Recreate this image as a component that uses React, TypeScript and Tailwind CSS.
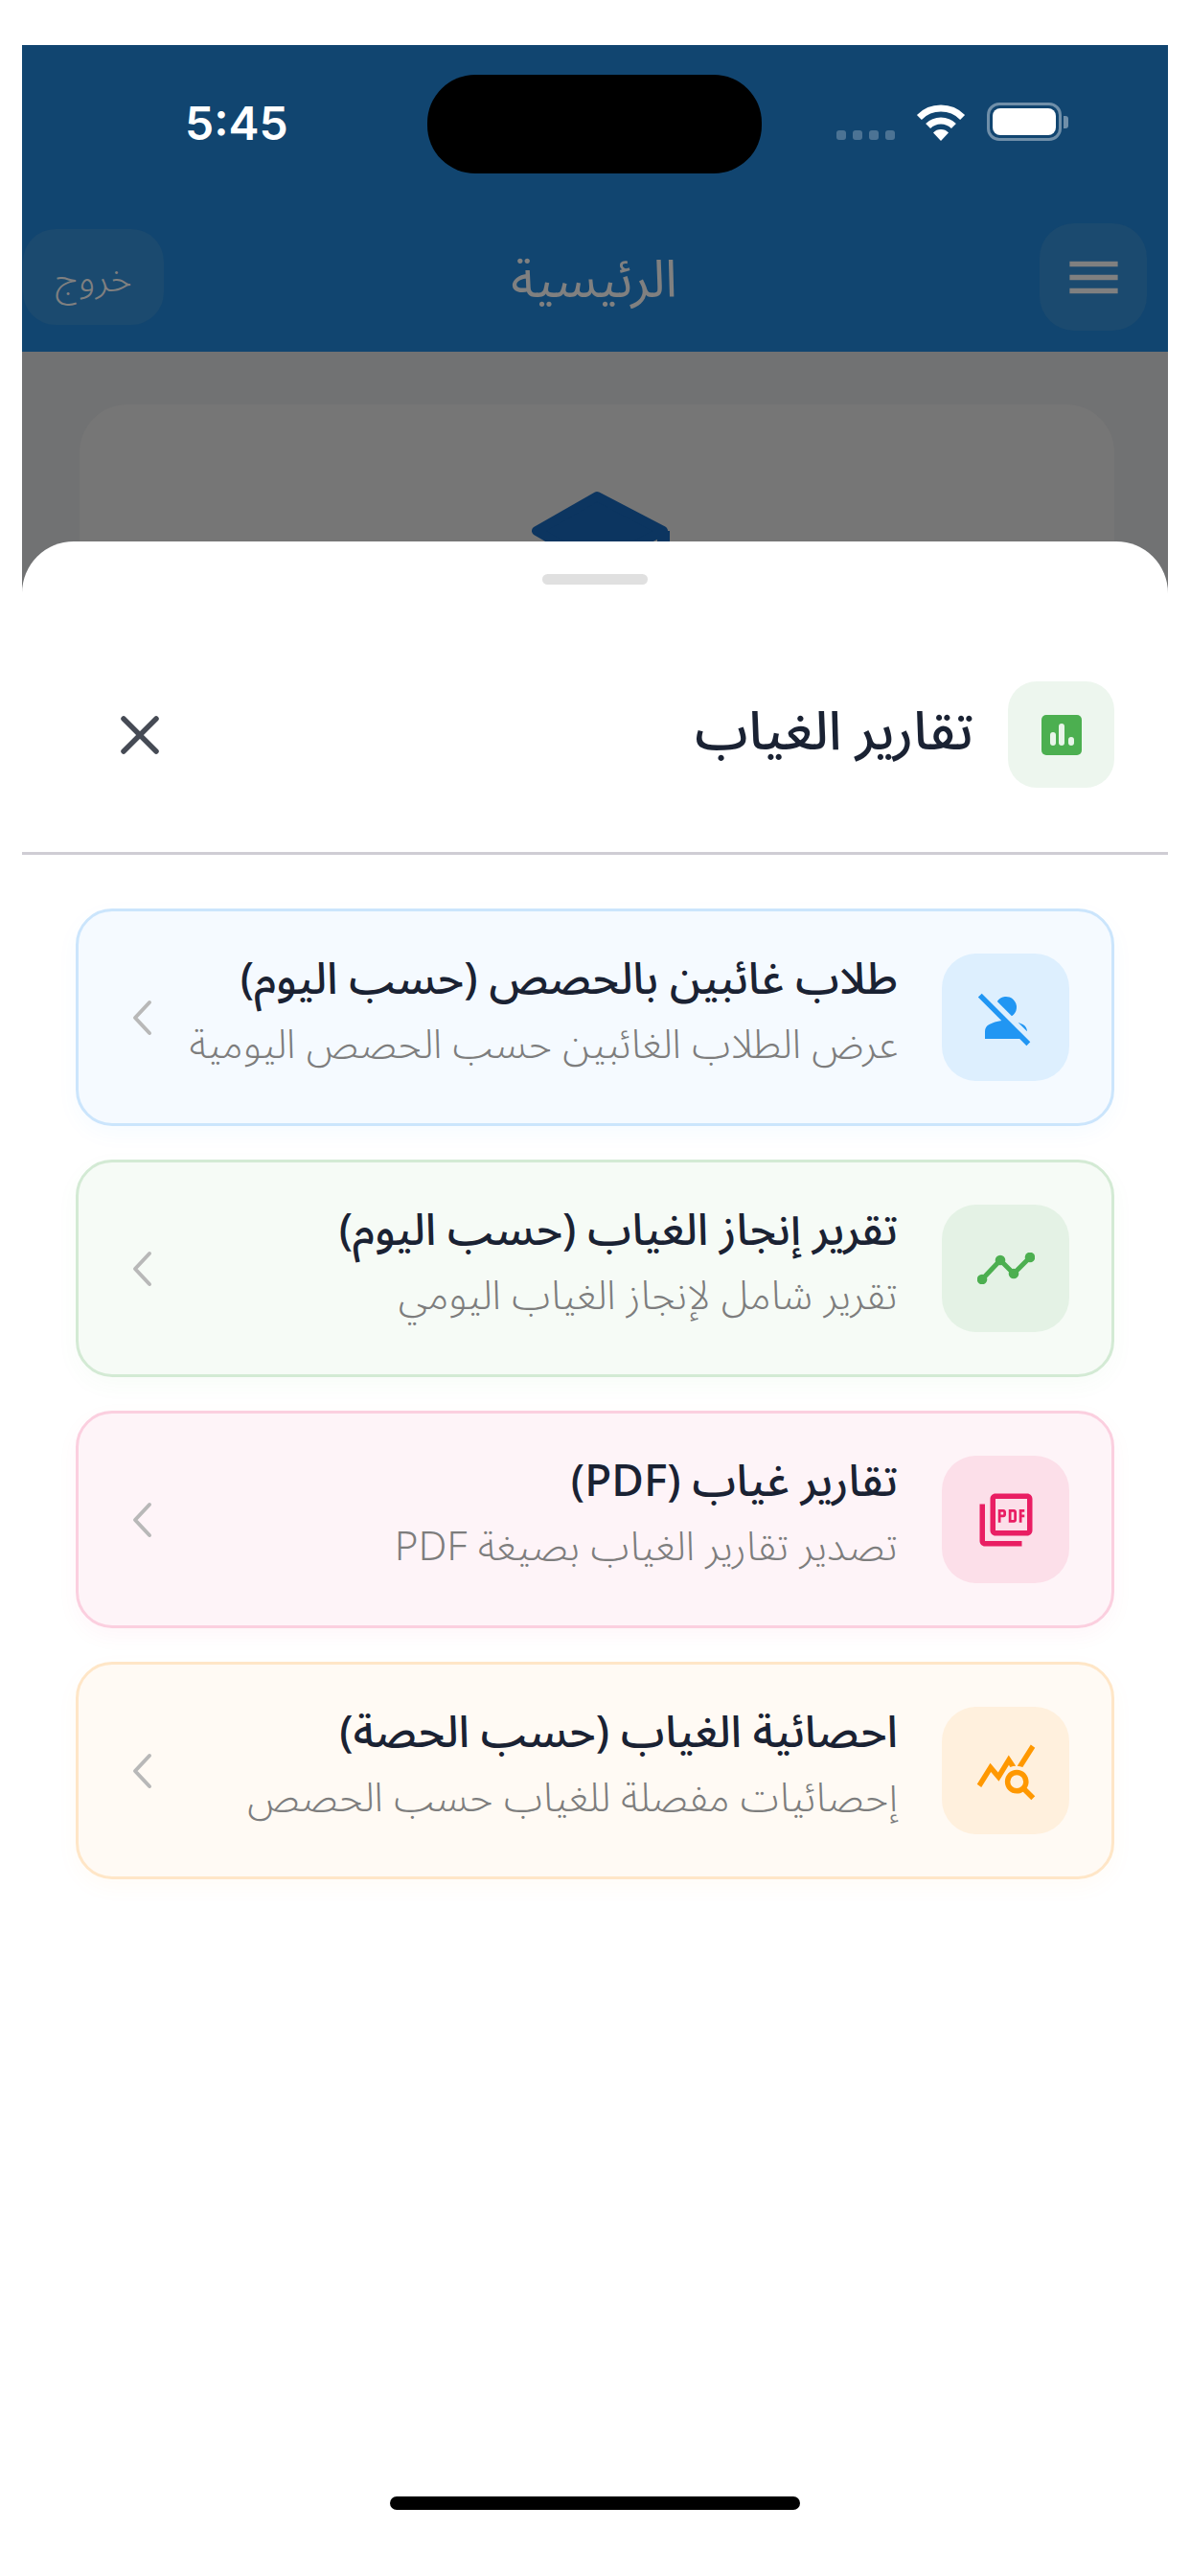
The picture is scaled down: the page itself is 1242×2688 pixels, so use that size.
import { MdMenu, MdOutlinePictureAsPdf, MdPersonOff, MdQueryStats } from 'react-icons/md';
import type { ReactNode } from 'react';

const ARABIC = 'font-["Noto_Sans","Noto_Sans_Arabic","DejaVu_Sans",sans-serif]';

interface Report {
  title: string;
  subtitle: string;
  icon: ReactNode;
  card: string;
  tile: string;
}

// Line with a dot on every corner, wider and taller than the stock timeline icon.
function TrendIcon() {
  return (
    <svg width="60" height="33" viewBox="0 0 60 33" fill="none">
      <path d="M5 28L24 8L38 22L55 5" stroke="#4caf50" strokeWidth="5" strokeLinejoin="round" />
      <circle cx="5" cy="28" r="5.3" fill="#4caf50" />
      <circle cx="24" cy="8" r="5.3" fill="#4caf50" />
      <circle cx="38" cy="22" r="5.3" fill="#4caf50" />
      <circle cx="55" cy="5" r="5.3" fill="#4caf50" />
    </svg>
  );
}

const reports: Report[] = [
  {
    title: 'طلاب غائبين بالحصص (حسب اليوم)',
    subtitle: 'عرض الطلاب الغائبين حسب الحصص اليومية',
    icon: <MdPersonOff size={66} className="text-[#2196f3]" />,
    card: 'bg-[#f5faff] border-[#cbe5fc] shadow-[0_8px_24px_rgba(33,150,243,0.04)]',
    tile: 'bg-[#ddeffe]',
  },
  {
    title: 'تقرير إنجاز الغياب (حسب اليوم)',
    subtitle: 'تقرير شامل لإنجاز الغياب اليومي',
    icon: <TrendIcon />,
    card: 'bg-[#f6fbf6] border-[#d3ead4] shadow-[0_8px_24px_rgba(76,175,80,0.04)]',
    tile: 'bg-[#e4f2e5]',
  },
  {
    title: 'تقارير غياب (PDF)',
    subtitle: 'تصدير تقارير الغياب بصيغة PDF',
    icon: <MdOutlinePictureAsPdf size={66} className="text-[#e91e63]" />,
    card: 'bg-[#fef4f8] border-[#fbcfdf] shadow-[0_8px_24px_rgba(233,30,99,0.04)]',
    tile: 'bg-[#fcdfe9]',
  },
  {
    title: 'احصائية الغياب (حسب الحصة)',
    subtitle: 'إحصائيات مفصلة للغياب حسب الحصص',
    icon: <MdQueryStats size={66} className="text-[#ff9800]" />,
    card: 'bg-[#fffaf4] border-[#ffe6c7] shadow-[0_8px_24px_rgba(255,152,0,0.04)]',
    tile: 'bg-[#fff0dd]',
  },
];

function WifiIcon() {
  return (
    <svg width="54" height="40" viewBox="0 0 54 40" className="text-white">
      <path d="M4.4 15.4A32 32 0 0 1 49.6 15.4" fill="none" stroke="currentColor" strokeWidth="7" />
      <path d="M13.6 24.6A19 19 0 0 1 40.4 24.6" fill="none" stroke="currentColor" strokeWidth="7" />
      <path d="M27 40L19 31.5A11 11 0 0 1 35 31.5Z" fill="currentColor" />
    </svg>
  );
}

function StatusIcons() {
  return (
    <div className="flex items-start w-[242px]">
      <div className="flex gap-[7px] mt-[29px]">
        <span className="w-[10px] h-[10px] rounded-[3px] bg-white/25" />
        <span className="w-[10px] h-[10px] rounded-[3px] bg-white/25" />
        <span className="w-[10px] h-[10px] rounded-[3px] bg-white/25" />
        <span className="w-[10px] h-[10px] rounded-[3px] bg-white/25" />
      </div>
      <div className="ml-[21px]">
        <WifiIcon />
      </div>
      <div className="ml-[21px] w-[79px] h-[40px] rounded-[13px] border-[3px] border-white/40 p-[3px]">
        <div className="w-full h-full rounded-[8px] bg-white" />
      </div>
      <span className="ml-[2px] mt-[14px] w-[5px] h-[13px] rounded-r-[3px] bg-white/40" />
    </div>
  );
}

function ReportCard({ report }: { report: Report }) {
  return (
    <div className={`flex items-center h-[227px] rounded-[38px] border-[3px] pr-[44px] pl-[54px] ${report.card}`}>
      <div className={`flex items-center justify-center w-[133px] h-[133px] rounded-[36px] shrink-0 ${report.tile}`}>
        {report.icon}
      </div>
      <div className="flex-1 mr-[46px] mb-[17px]">
        <div className="text-[46px] leading-[56px] font-medium text-[#1a2233] whitespace-nowrap">{report.title}</div>
        <div className="mt-[13px] text-[42px] leading-[56px] font-light text-[#7d7d7d] whitespace-nowrap">{report.subtitle}</div>
      </div>
      <svg width="24" height="38" viewBox="0 0 24 38" fill="none" className="shrink-0">
        <path d="M20 3L5 19L20 35" stroke="#b8b8b8" strokeWidth="4" strokeLinecap="round" strokeLinejoin="round" />
      </svg>
    </div>
  );
}

export default function App() {
  return (
    <div dir="rtl" className={`relative w-[1242px] h-[2688px] overflow-hidden bg-white pt-[47px] px-[23px] ${ARABIC}`}>
      <div className="bg-[#114570] h-[320px]">
        <div dir="ltr" className="flex items-start h-[186px] pt-[31px] pl-[170px]">
          <div className="w-[253px] pt-[26px] text-[48px] leading-[50px] font-semibold text-white font-['Inter',sans-serif]">
            5:45
          </div>
          <div className="w-[349px] h-[103px] rounded-[50px] bg-black" />
          <div className="ml-[78px] mt-[29px]">
            <StatusIcons />
          </div>
        </div>
        <div className="flex items-center justify-between h-[112px] pr-[22px] pl-[1px]">
          <div className="flex items-center justify-center w-[112px] h-[112px] rounded-[36px] bg-[#1b4a6f]">
            <MdMenu size={67} className="text-[#808080]" />
          </div>
          <div className="mr-[16px] text-[54px] text-[#808080]">الرئيسية</div>
          <div className="flex items-center justify-center w-[147px] h-[100px] rounded-[34px] bg-[#1b4a6f] text-[39px] font-light text-[#808080]">
            خروج
          </div>
        </div>
      </div>

      <div className="h-[2321px] bg-[#717273] pr-[56px] pl-[60px] pt-[55px]">
        <div dir="ltr" className="flex justify-center h-full rounded-t-[50px] bg-[#767676] pt-[86px] pl-[8px]">
          <svg width="154" height="60" viewBox="0 0 154 60" className="shrink-0">
            <path d="M73 10L142 46L73 82L10 46Z" fill="#0c3560" stroke="#0c3560" strokeWidth="10" strokeLinejoin="round" />
            <rect x="136" y="46" width="13" height="14" fill="#0c3560" />
          </svg>
        </div>
      </div>

      <div className="absolute left-[23px] right-[23px] top-[565px] bottom-0 flex flex-col rounded-t-[54px] bg-white">
        <div className="self-center w-[110px] h-[11px] mt-[34px] rounded-full bg-[#e0e0e0]" />
        <div className="flex items-center mt-[101px] px-[56px]">
          <div className="flex items-center justify-center w-[111px] h-[111px] rounded-[30px] bg-[#edf6ee]">
            <svg width="42" height="42" viewBox="0 0 42 42">
              <rect width="42" height="42" rx="5" fill="#4caf50" />
              <rect x="9" y="18" width="6" height="14" rx="3" fill="#e8f5e9" />
              <rect x="18" y="9" width="6" height="23" rx="3" fill="#e8f5e9" />
              <rect x="28" y="23" width="6" height="9" rx="3" fill="#e8f5e9" />
            </svg>
          </div>
          <div className="flex-1 mr-[36px] mb-[14px] text-[56px] font-medium text-[#1a2233]">تقارير الغياب</div>
          <svg width="46" height="46" viewBox="0 0 46 46" fill="none" className="ml-[44px]">
            <path d="M6 6L40 40M40 6L6 40" stroke="#464b55" strokeWidth="5.5" strokeLinecap="round" />
          </svg>
        </div>
        <div className="h-[3px] mt-[67px] bg-[#cfcdd4]" />
        <div className="flex flex-col gap-[35px] mt-[56px] px-[56px]">
          {reports.map(report => (
            <ReportCard key={report.title} report={report} />
          ))}
        </div>
        <div className="self-center mt-auto mb-[69px] w-[428px] h-[14px] rounded-full bg-black" />
      </div>
    </div>
  );
}
